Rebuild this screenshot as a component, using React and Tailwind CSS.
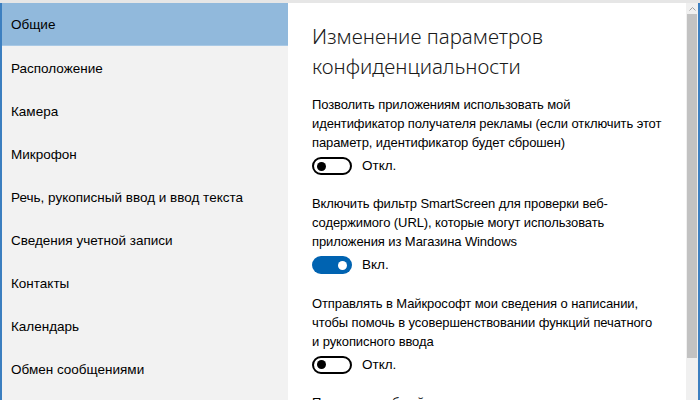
import React from 'react'

const items = [
  'Общие',
  'Расположение',
  'Камера',
  'Микрофон',
  'Речь, рукописный ввод и ввод текста',
  'Сведения учетной записи',
  'Контакты',
  'Календарь',
  'Обмен сообщениями',
]

// lines are broken where the original window wraps them
const settings = [
  {
    lines: [
      'Позволить приложениям использовать мой',
      'идентификатор получателя рекламы (если отключить этот',
      'параметр, идентификатор будет сброшен)',
    ],
    on: false,
  },
  {
    lines: [
      'Включить фильтр SmartScreen для проверки веб-',
      'содержимого (URL), которые могут использовать',
      'приложения из Магазина Windows',
    ],
    on: true,
  },
  {
    lines: [
      'Отправлять в Майкрософт мои сведения о написании,',
      'чтобы помочь в усовершенствовании функций печатного',
      'и рукописного ввода',
    ],
    on: false,
  },
]

function Toggle({ on }) {
  if (on) {
    return (
      <div className="w-[40px] h-[18px] rounded-full bg-[#0063b1] flex items-center justify-end pr-[5px]">
        <div className="w-[9px] h-[9px] rounded-full bg-white" />
      </div>
    )
  }
  return (
    <div className="w-[40px] h-[18px] rounded-full border-2 border-black flex items-center pl-[3px]">
      <div className="w-[9px] h-[9px] rounded-full bg-black" />
    </div>
  )
}

export default function App() {
  return (
    <div
      className="w-[700px] h-[400px] overflow-hidden bg-[#e6e6e6] pt-[3px] flex text-black"
      style={{ fontFamily: '"Liberation Sans", Arial, sans-serif' }}
    >
      {/* sidebar */}
      <div className="w-[288px] shrink-0 bg-[#f2f2f2] border-l-2 border-[#3c7fc0]">
        {items.map((label, i) => (
          <div
            key={label}
            className={`h-[43px] flex items-center pl-[9px] pt-[3px] text-[13.5px] ${
              i === 0 ? 'bg-[#91b9dc] border-b border-[#a9c9e5]' : ''
            }`}
          >
            {label}
          </div>
        ))}
      </div>

      {/* content */}
      <div className="flex-1 bg-white pl-[24px] pr-[10px] pt-[18px] overflow-hidden whitespace-nowrap">
        <h1
          className="text-[20.5px] font-light leading-[30px] text-[#1a1a1a]"
          style={{ fontFamily: '"Noto Sans", sans-serif' }}
        >
          Изменение параметров
          <br />
          конфиденциальности
        </h1>
        <div className="mt-[14px] flex flex-col gap-[18px]">
          {settings.map((s, i) => (
            <div key={i}>
              <p className="text-[13px] leading-[19px] tracking-[-0.1px]">
                {s.lines.map((l, j) => (
                  <React.Fragment key={j}>
                    {l}
                    {j < s.lines.length - 1 && <br />}
                  </React.Fragment>
                ))}
              </p>
              <div className="mt-[4px] flex items-center gap-[10px]">
                <Toggle on={s.on} />
                <span className="text-[13.5px]">{s.on ? 'Вкл.' : 'Откл.'}</span>
              </div>
            </div>
          ))}
          <p className="text-[13px] leading-[19px] tracking-[-0.1px]">
            Позволить веб-сайтам предоставлять местную
          </p>
        </div>
      </div>

      {/* scrollbar */}
      <div className="w-[12px] shrink-0 bg-[#f0f0f0] flex flex-col">
        <div className="h-[11px] flex items-center justify-center">
          <svg width="7" height="4" viewBox="0 0 7 4">
            <path d="M0.5 3.5 L3.5 0.5 L6.5 3.5" fill="none" stroke="#a0a0a0" strokeWidth="1" />
          </svg>
        </div>
        <div className="h-[344px] bg-[#c2c2c2] mx-[1px]" />
      </div>
      <div className="w-[2px] shrink-0 bg-[#3c7fc0]" />
    </div>
  )
}
